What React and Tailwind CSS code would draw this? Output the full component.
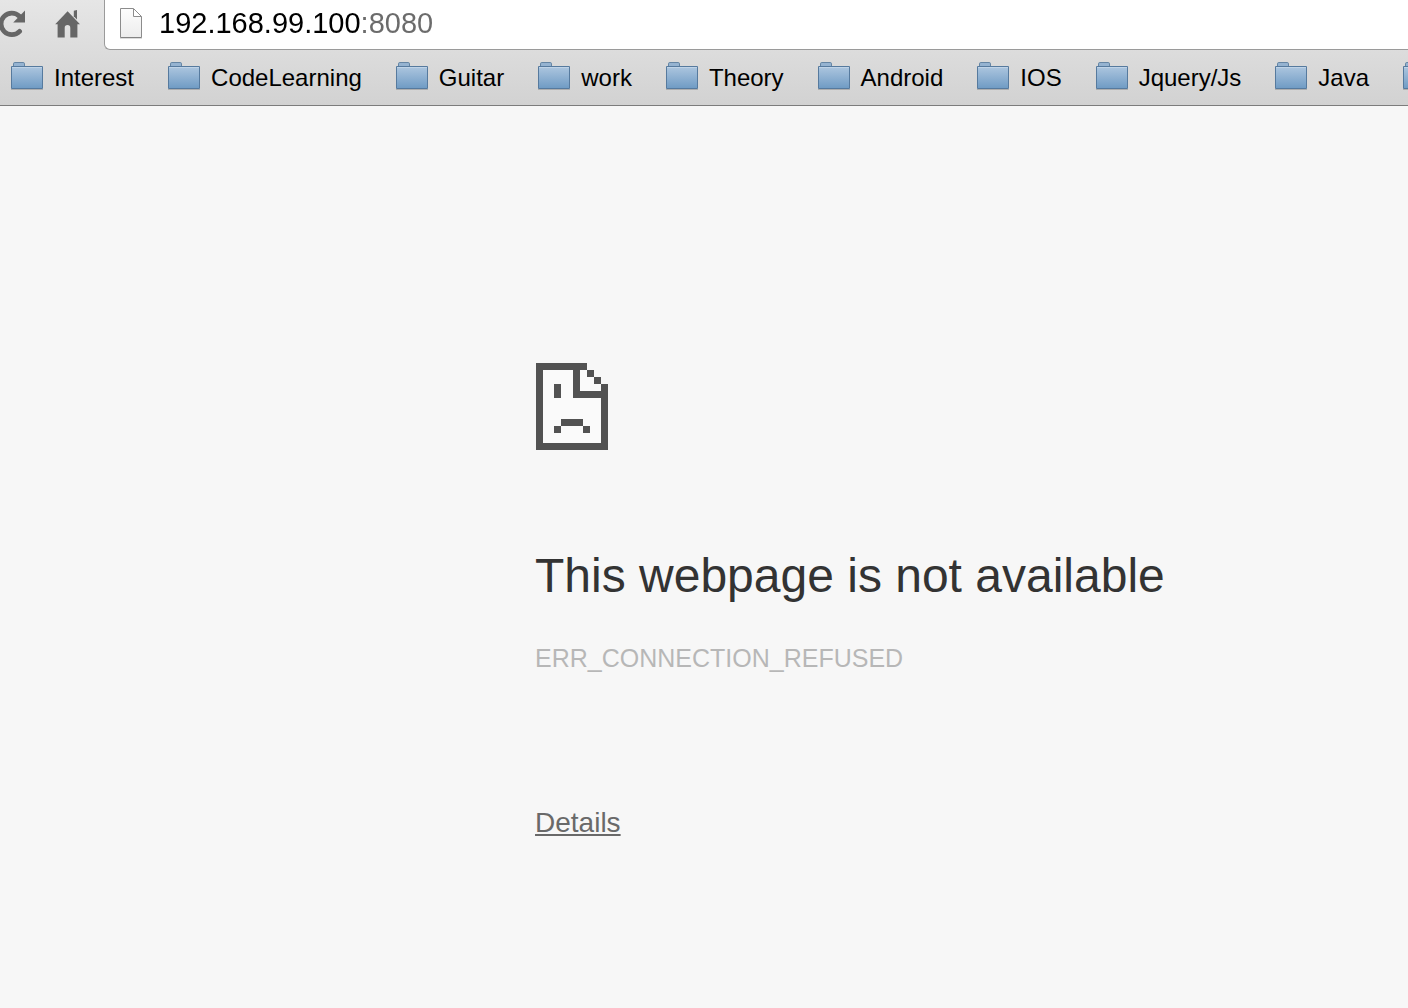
const BOOKMARKS = [
  "Interest",
  "CodeLearning",
  "Guitar",
  "work",
  "Theory",
  "Android",
  "IOS",
  "Jquery/Js",
  "Java",
];

function ReloadIcon() {
  return (
    <svg width="26" height="28" viewBox="0 0 26 28" aria-hidden="true">
      <path
        d="M19.6 21.4A10.8 10.8 0 1 1 19.4 6.2"
        fill="none"
        stroke="#666"
        strokeWidth="4.8"
        strokeLinecap="round"
      />
      <path d="M25 .4v12H13.2z" fill="#666" />
    </svg>
  );
}

function HomeIcon() {
  return (
    <svg width="26" height="28" viewBox="0 0 26 28" aria-hidden="true">
      <path
        d="M13.6 1.2 26 14.2h-2.6V27.5H16.3v-9.6a2.8 2.8 0 0 0-5.6 0v9.6H3.6V14.2H1.2z"
        fill="#666"
      />
      <path d="M19.8.7 23 0v9.6l-3.2-3.4z" fill="#666" />
    </svg>
  );
}

function PageIcon() {
  return (
    <svg width="24" height="32" viewBox="0 0 24 32" aria-hidden="true">
      <defs>
        <linearGradient id="page" x1="0" y1="0" x2="0" y2="1">
          <stop offset="0" stopColor="#fdfdfd" />
          <stop offset="1" stopColor="#ececec" />
        </linearGradient>
      </defs>
      <path d="M1.5 1.5H14L22.5 10v20.5h-21z" fill="url(#page)" stroke="#8c8c8c" />
      <path d="M14.5 1.5v8h8z" fill="#fff" stroke="#8c8c8c" />
      <path d="M1 31.2h22" stroke="#000" strokeOpacity=".2" />
    </svg>
  );
}

function FolderIcon() {
  return (
    <svg
      className="shrink-0"
      width="32"
      height="28"
      viewBox="0 0 32 28"
      aria-hidden="true"
    >
      <defs>
        <linearGradient id="folder" x1="0" y1="0" x2="0" y2="1">
          <stop offset="0" stopColor="#adc6df" />
          <stop offset="1" stopColor="#6f9bc4" />
        </linearGradient>
      </defs>
      <path
        d="M2.5 5V1.8Q2.5.5 3.8.5h8.4q1.3 0 1.3 1.3V5"
        fill="#95b3d1"
        stroke="#6585a4"
      />
      <path d="M.5 4.5h31v22H.5z" fill="url(#folder)" stroke="#567a9e" />
      <path d="M1 5.5h30" stroke="#bfd3e7" />
      <path d="M0 27.5h32" stroke="#000" strokeOpacity=".18" />
    </svg>
  );
}

// Pixel-art page with a sad face
function SadPageIcon() {
  return (
    <svg
      width="73"
      height="87"
      viewBox="-1 0 73 87"
      shapeRendering="crispEdges"
      aria-hidden="true"
    >
      <path d="M0 0h51v7h7v7h7v7h7v66H0z" fill="#fafafa" />
      <path
        d="M0 0h51v7h-7v21h28v59H0zM7 7v73h58V35H37V7z"
        fill="#525252"
        fillRule="evenodd"
      />
      <path
        d="M51 7h7v7h-7zM58 14h7v7h-7zM65 21h7v7h-7zM18 21h7v14h-7zM25 56h22v7H25zM18 63h7v7h-7zM47 63h7v7h-7z"
        fill="#525252"
      />
    </svg>
  );
}

function Toolbar() {
  return (
    <div className="flex h-[50px]">
      <div className="flex w-[104px] shrink-0 items-start gap-7 pt-2.5">
        <button aria-label="Reload">
          <ReloadIcon />
        </button>
        <button aria-label="Home">
          <HomeIcon />
        </button>
      </div>
      <div className="flex flex-1 items-center gap-4 rounded-bl-md border-b border-l border-[#9a9a9a] bg-white pb-1 pl-3.5">
        <PageIcon />
        {/* the port is greyed out, so the text takes its colour from the background */}
        <input
          aria-label="Address"
          defaultValue="192.168.99.100:8080"
          className="min-w-0 flex-1 bg-[linear-gradient(to_right,#000_202px,#6b6b6b_202px)] bg-clip-text text-[29px] leading-8 text-transparent outline-none"
        />
      </div>
    </div>
  );
}

function BookmarksBar() {
  return (
    <nav className="flex h-[55px] gap-[34px] overflow-hidden pt-3 pl-[11px]">
      {BOOKMARKS.map((name) => (
        <a key={name} href="#" className="flex h-8 shrink-0 gap-[11px]">
          <FolderIcon />
          <span className="text-2xl leading-8">{name}</span>
        </a>
      ))}
      <a href="#" aria-label="More bookmarks" className="h-8 shrink-0">
        <FolderIcon />
      </a>
    </nav>
  );
}

export default function App() {
  return (
    <div className="flex min-h-screen flex-col bg-[#f7f7f7] font-['Liberation_Sans',Arial,sans-serif]">
      <header className="border-b border-[#7c7c7c] bg-linear-to-b from-[#e6e6e6] to-[#d2d2d2] text-black">
        <Toolbar />
        <BookmarksBar />
      </header>
      <main className="flex flex-1 flex-col items-start pt-[257px] pl-[38%]">
        <SadPageIcon />
        <h1 className="mt-[98px] text-5xl leading-14 text-[#333]">
          This webpage is not available
        </h1>
        <p className="mt-[38px] text-[25px] leading-8 text-[#b7b7b7]">
          ERR_CONNECTION_REFUSED
        </p>
        <a href="#" className="mt-[133px] text-[28px] leading-8 text-[#696969] underline">
          Details
        </a>
      </main>
    </div>
  );
}
